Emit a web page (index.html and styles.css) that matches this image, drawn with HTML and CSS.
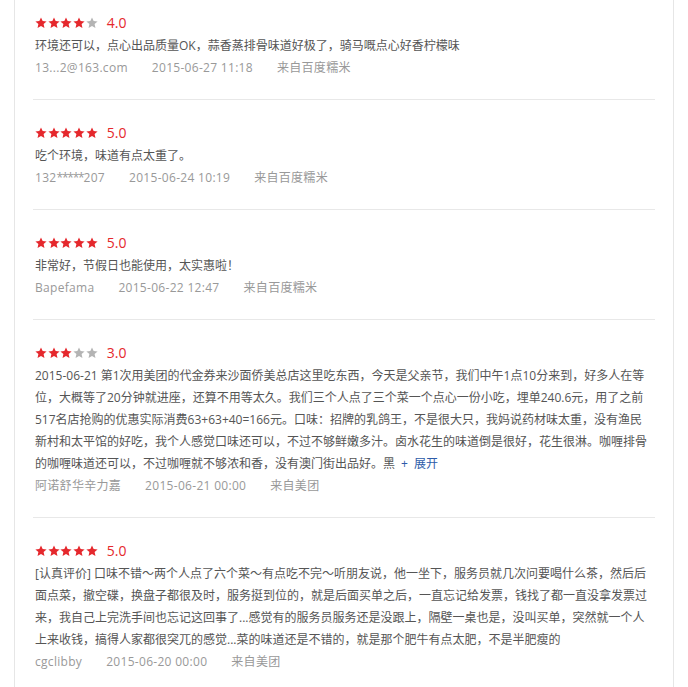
FILE: index.html
```html
<!DOCTYPE html>
<html lang="zh-CN">
<head>
    <meta charset="UTF-8">
    <meta name="viewport" content="width=device-width, initial-scale=1.0">
    <title>评论</title>
    <link rel="stylesheet" href="styles.css">
</head>
<body>
    <svg class="sprite" xmlns="http://www.w3.org/2000/svg">
        <symbol id="star" viewBox="0 0 12 12">
            <polygon points="6,0.4 7.65,4.05 11.6,4.45 8.6,7.1 9.45,11.1 6,9.05 2.55,11.1 3.4,7.1 0.4,4.45 4.35,4.05"/>
        </symbol>
    </svg>

    <section class="reviews">
        <div class="review">
            <div class="rating">
                <span class="stars">
                    <svg class="star on"><use href="#star"/></svg>
                    <svg class="star on"><use href="#star"/></svg>
                    <svg class="star on"><use href="#star"/></svg>
                    <svg class="star on"><use href="#star"/></svg>
                    <svg class="star"><use href="#star"/></svg>
                </span>
                <span class="score">4.0</span>
            </div>
            <p class="text">环境还可以，点心出品质量OK，蒜香蒸排骨味道好极了，骑马嘅点心好香柠檬味</p>
            <div class="meta">
                <span>13...2@163.com</span>
                <span>2015-06-27 11:18</span>
                <span>来自百度糯米</span>
            </div>
        </div>

        <div class="review">
            <div class="rating">
                <span class="stars">
                    <svg class="star on"><use href="#star"/></svg>
                    <svg class="star on"><use href="#star"/></svg>
                    <svg class="star on"><use href="#star"/></svg>
                    <svg class="star on"><use href="#star"/></svg>
                    <svg class="star on"><use href="#star"/></svg>
                </span>
                <span class="score">5.0</span>
            </div>
            <p class="text">吃个环境，味道有点太重了。</p>
            <div class="meta">
                <span>132<span class="mask">*****</span>207</span>
                <span>2015-06-24 10:19</span>
                <span>来自百度糯米</span>
            </div>
        </div>

        <div class="review">
            <div class="rating">
                <span class="stars">
                    <svg class="star on"><use href="#star"/></svg>
                    <svg class="star on"><use href="#star"/></svg>
                    <svg class="star on"><use href="#star"/></svg>
                    <svg class="star on"><use href="#star"/></svg>
                    <svg class="star on"><use href="#star"/></svg>
                </span>
                <span class="score">5.0</span>
            </div>
            <p class="text">非常好，节假日也能使用，太实惠啦！</p>
            <div class="meta">
                <span>Bapefama</span>
                <span>2015-06-22 12:47</span>
                <span>来自百度糯米</span>
            </div>
        </div>

        <div class="review">
            <div class="rating">
                <span class="stars">
                    <svg class="star on"><use href="#star"/></svg>
                    <svg class="star on"><use href="#star"/></svg>
                    <svg class="star on"><use href="#star"/></svg>
                    <svg class="star"><use href="#star"/></svg>
                    <svg class="star"><use href="#star"/></svg>
                </span>
                <span class="score">3.0</span>
            </div>
            <p class="text">2015-06-21 第1次用美团的代金券来沙面侨美总店这里吃东西，今天是父亲节，我们中午1点10分来到，好多人在等位，大概等了20分钟就进座，还算不用等太久。我们三个人点了三个菜一个点心一份小吃，埋单240.6元，用了之前517名店抢购的优惠实际消费63+63+40=166元。口味：招牌的乳鸽王，不是很大只，我妈说药材味太重，没有渔民新村和太平馆的好吃，我个人感觉口味还可以，不过不够鲜嫩多汁。卤水花生的味道倒是很好，花生很淋。咖喱排骨的咖喱味道还可以，不过咖喱就不够浓和香，没有澳门街出品好。黑<a class="more" href="#"><span class="plus">+</span>展开</a></p>
            <div class="meta">
                <span>阿诺舒华辛力嘉</span>
                <span>2015-06-21 00:00</span>
                <span>来自美团</span>
            </div>
        </div>

        <div class="review">
            <div class="rating">
                <span class="stars">
                    <svg class="star on"><use href="#star"/></svg>
                    <svg class="star on"><use href="#star"/></svg>
                    <svg class="star on"><use href="#star"/></svg>
                    <svg class="star on"><use href="#star"/></svg>
                    <svg class="star on"><use href="#star"/></svg>
                </span>
                <span class="score">5.0</span>
            </div>
            <p class="text">[认真评价] 口味不错～两个人点了六个菜～有点吃不完～听朋友说，他一坐下，服务员就几次问要喝什么茶，然后后面点菜，撤空碟，换盘子都很及时，服务挺到位的，就是后面买单之后，一直忘记给发票，钱找了都一直没拿发票过来，我自己上完洗手间也忘记这回事了...感觉有的服务员服务还是没跟上，隔壁一桌也是，没叫买单，突然就一个人上来收钱，搞得人家都很突兀的感觉...菜的味道还是不错的，就是那个肥牛有点太肥，不是半肥瘦的</p>
            <div class="meta">
                <span>cgclibby</span>
                <span>2015-06-20 00:00</span>
                <span>来自美团</span>
            </div>
        </div>
    </section>
</body>
</html>
```

FILE: styles.css
```css
* {
    margin: 0;
    padding: 0;
    box-sizing: border-box;
}

body {
    background: #fff;
    font-family: "Open Sans", "Noto Sans CJK SC", sans-serif;
    overflow: hidden;
}

.sprite {
    display: none;
}

.reviews {
    width: 660px;
    min-height: 720px;
    margin: -10px 0 0 14px;
    padding: 0 18px;
    border-left: 1px solid #e6e6e6;
    border-right: 1px solid #e6e6e6;
}

.review {
    padding: 21px 2px 20px;
    border-bottom: 1px solid #e8e8e8;
}

.rating {
    display: flex;
    align-items: center;
    height: 24px;
}

.stars {
    display: flex;
    gap: 0.7px;
}

.star {
    width: 12px;
    height: 12px;
    fill: #b4b4b4;
}

.star.on {
    fill: #e5282d;
}

.score {
    margin-left: 9px;
    font-size: 14px;
    line-height: 24px;
    color: #e5282d;
}

.text {
    font-size: 12px;
    line-height: 22px;
    color: #555;
}

.more {
    color: #2e5ba8;
    text-decoration: none;
}

.more .plus {
    margin: 0 6px;
}

.meta {
    display: flex;
    gap: 24px;
    font-size: 12px;
    line-height: 22px;
    letter-spacing: 0.3px;
    color: #999;
}

.meta .mask {
    letter-spacing: -1.2px;
}
```
